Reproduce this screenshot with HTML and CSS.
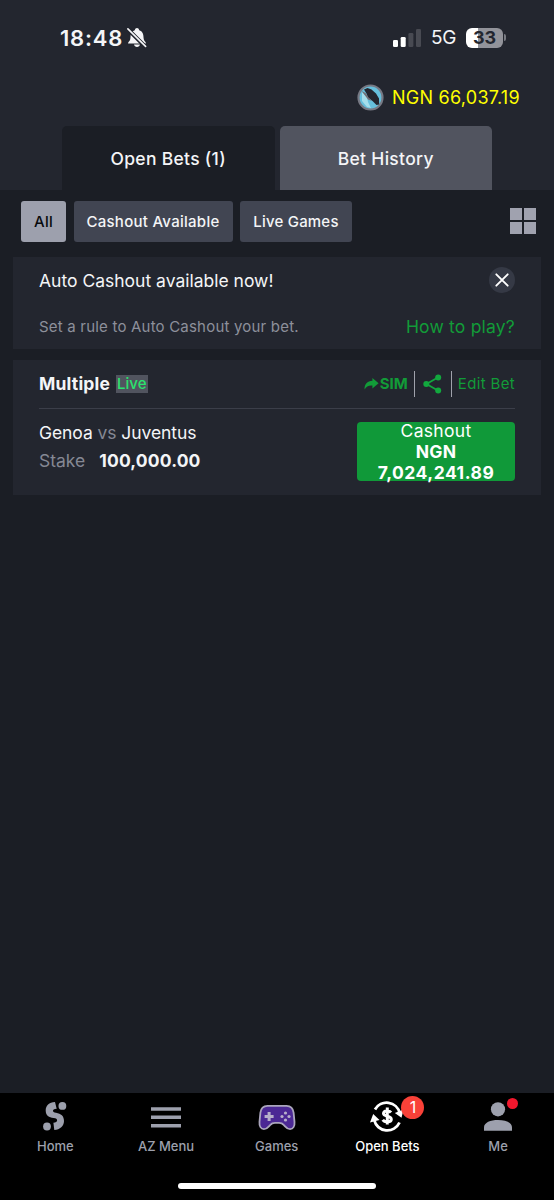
FILE: index.html
```
<!DOCTYPE html>
<html lang="en">
<head>
<meta charset="utf-8">
<title>Open Bets</title>
<link rel="stylesheet" href="styles.css">
</head>
<body>
<div class="app">
  <header class="header">
    <div class="status">
      <span class="clock">18:48</span>
      <svg class="bell" width="20" height="21" viewBox="0 0 20 21">
        <path d="M1 16.400c0-1.800 2.400-2.400 2.400-5.200 0-4.400 1.200-7 4.400-8 .3-1.500 1.100-2.300 2.200-2.300s1.900.8 2.200 2.300c3.200 1 4.400 3.600 4.400 8 0 2.800 2.400 3.400 2.400 5.200z" fill="#f5f5f7"/>
        <path d="M7 17.600h6c-.3 1.600-1.500 2.400-3 2.400s-2.700-.8-3-2.400z" fill="#f5f5f7"/>
        <path d="M0 1.400 18.600 20" stroke="#23262f" stroke-width="4"/>
        <path d="M.9 1.900 18.600 19.400" stroke="#f5f5f7" stroke-width="1.600" stroke-linecap="round"/>
      </svg>
      <svg class="signal" width="28" height="18" viewBox="0 0 28 18">
        <rect x="0" y="11" width="5" height="7" rx="1.300" fill="#fff"/>
        <rect x="7.700" y="8" width="5" height="10" rx="1.300" fill="#fff"/>
        <rect x="15.400" y="4" width="5" height="14" rx="1.300" fill="#484a52"/>
        <rect x="23" y="0" width="5" height="18" rx="1.300" fill="#484a52"/>
      </svg>
      <span class="network">5G</span>
      <span class="battery">33</span><span class="battery-tip"></span>
    </div>
    <div class="balance">
      <svg width="27" height="27" viewBox="0 0 27 27">
        <circle cx="13.500" cy="13.500" r="12" fill="#66bfdc" stroke="#777984" stroke-width="2.200"/>
        <path d="M5 8l5 5 1 5 3 6-4-1-5-6z" fill="#a5deeb"/>
        <path d="M7 5.500l3.500-1.500 4 1.500 4.500 4 3 5 .2 6-2.700.5-4-4-4.500-3.500-1.500-4z" fill="#24252e"/>
        <path d="M4.500 7l4 2 3 4.500 3.500 3.500-4-1.500-3-4z" fill="#746f75"/>
      </svg>
      <span class="amount">NGN 66,037.19</span>
    </div>
    <nav class="tabs">
      <a class="tab active"><span>Open Bets (1)</span></a>
      <a class="tab"><span>Bet History</span></a>
    </nav>
  </header>

  <main class="content">
    <div class="filters">
      <button class="chip all">All</button>
      <button class="chip available">Cashout Available</button>
      <button class="chip live-games">Live Games</button>
      <svg class="grid" width="26" height="26" viewBox="0 0 26 26" fill="#a0a2af">
        <path d="M0 0h12v12H0zM14 0h12v12H14zM0 14h12v12H0zM14 14h12v12H14z"/>
      </svg>
    </div>

    <section class="card promo">
      <div class="row">
        <span class="promo-title">Auto Cashout available now!</span>
        <span class="close"><svg width="26" height="26" viewBox="0 0 26 26"><path d="M7.300 7.300l11.400 11.400M18.700 7.300 7.300 18.700" stroke="#fff" stroke-width="1.900" stroke-linecap="round"/></svg></span>
      </div>
      <div class="row promo-bottom">
        <span class="promo-text">Set a rule to Auto Cashout your bet.</span>
        <a class="how">How to play?</a>
      </div>
    </section>

    <section class="card bet">
      <div class="bet-head">
        <span class="multiple">Multiple</span>
        <span class="live">Live</span>
        <svg class="forward" width="15" height="12" viewBox="0 0 15 12"><path d="M8.400 0 14.600 5.200 8.400 10.400V7.600C4.700 7.200 2.300 8.500.6 11.500.2 6.500 3.300 3 8.400 2.800z" fill="#129b38"/></svg>
        <span class="sim">SIM</span>
        <i class="bar"></i>
        <svg class="share" width="19" height="20" viewBox="0 0 19 20" fill="#12a83e"><path d="M15.300 3.300 3.500 10l11.800 6.700" fill="none" stroke="#12a83e" stroke-width="1.800"/><circle cx="15.200" cy="3.400" r="3"/><circle cx="3.300" cy="10" r="3"/><circle cx="15.200" cy="16.600" r="3"/></svg>
        <i class="bar bar-last"></i>
        <a class="edit">Edit Bet</a>
      </div>
      <div class="bet-body">
        <div class="details">
          <div class="teams">Genoa <span class="muted">vs</span> Juventus</div>
          <div class="stake"><span class="muted">Stake</span><b>100,000.00</b></div>
        </div>
        <button class="cashout"><span class="cash-label">Cashout</span><b>NGN</b><b class="cash-value">7,024,241.89</b></button>
      </div>
    </section>
  </main>

  <footer class="bottom">
    <nav class="menu">
      <a class="item home">
        <svg width="28" height="32" viewBox="0 0 28 32" fill="#9da0ad">
          <circle cx="21.400" cy="4.900" r="3.900"/><circle cx="6" cy="25.500" r="3.900"/>
          <path d="M14 1C8 1.300 4.700 4.800 4.700 9.500c0 5 3.300 7 7.800 7.600 2.800.4 3.600 1 3.600 2.200 0 1.500-1.300 2.200-3.700 2.400l.9 7.300C19 28.600 23 25 23 20c0-5-3-7.400-8-8.200-2.200-.4-3-.9-3-2 0-1.200 1-1.800 3.700-2z"/>
        </svg><span>Home</span>
      </a>
      <a class="item az">
        <svg width="30" height="32" viewBox="0 0 30 32" fill="#9da0ad"><path d="M0 6.200h30v3.600H0zM0 14.600h30v3.400H0zM0 23h30v3.600H0z"/></svg><span>AZ Menu</span>
      </a>
      <a class="item games">
        <svg width="38" height="32" viewBox="0 0 38 32">
          <path d="M9.500 4.900h19c4 0 6.600 2.800 7.100 6.800l.9 9.200c.4 4.400-1.400 7.200-4.400 7.200-2.300 0-3.700-1.100-5.300-3l-1.100-1.200c-1.300-1.500-2.700-2-4.600-2h-4.200c-1.900 0-3.300.5-4.600 2l-1.100 1.200c-1.600 1.900-3 3-5.300 3-3 0-4.800-2.800-4.400-7.200l.9-9.200c.5-4 3.100-6.800 7.100-6.800z" fill="#4b2894" stroke="#aaa5bc" stroke-width="1.800"/>
          <path d="M9.600 11h3v3h3v3h-3v3h-3v-3h-3v-3h3z" fill="#b8b0ca"/>
          <g fill="#b8b0ca"><circle cx="27.500" cy="12" r="1.600"/><circle cx="27.500" cy="19" r="1.600"/><circle cx="24" cy="15.500" r="1.600"/><circle cx="31" cy="15.500" r="1.600"/></g>
        </svg><span>Games</span>
      </a>
      <a class="item open">
        <span class="icon-wrap">
          <svg width="34" height="32" viewBox="0 0 34 32" fill="none" stroke="#fff">
            <path d="M5 8.500A13.400 13.400 0 0 1 29.700 12M29.500 21.500A13.400 13.400 0 0 1 4.200 19" stroke-width="2.800"/>
            <path d="M33.500 8.500 31.500 16.800 24.800 12zM0 21.500 3.200 13 9.500 19z" fill="#fff" stroke="none"/>
            <path d="M21 11.500c-1.600-2-7.500-2.200-7.500 1.100 0 3.500 7.800 1.700 7.800 5.600 0 3.500-6.600 3.500-8.600.7M17.300 6.500v17" stroke-width="3"/>
          </svg>
          <span class="badge">1</span>
        </span>
        <span class="label">Open Bets</span>
      </a>
      <a class="item me">
        <span class="icon-wrap">
          <svg width="28" height="32" viewBox="0 0 28 32" fill="#9da0ad"><circle cx="14" cy="8.300" r="7.100"/><path d="M0 29.700v-3.500c0-4.600 6.500-7.200 14-7.200s14 2.600 14 7.200v3.500z"/></svg>
          <i class="dot"></i>
        </span>
        <span class="label">Me</span>
      </a>
    </nav>
    <div class="home-bar"></div>
  </footer>
</div>
</body>
</html>
```
FILE: styles.css
```
* { box-sizing: border-box; }
body { margin: 0; background: #1b1e25; font-family: Inter, "Liberation Sans", sans-serif; color: #f4f5f7; }
button { font: inherit; color: inherit; border: 0; padding: 0; }
span, a, b { white-space: nowrap; }
svg { display: block; flex: none; }
.app { width: 554px; height: 1200px; display: flex; flex-direction: column; }
.header { height: 190px; background: #23262f; display: flex; flex-direction: column; }
.status { height: 75px; padding-left: 60px; display: flex; align-items: center; }
.clock { width: 67px; font-size: 22px; font-weight: 600; letter-spacing: .8px; }
.signal { margin-left: 246px; }
.network { width: 35px; margin-left: 10px; font-size: 19px; letter-spacing: -.3px; }
.battery { width: 37px; height: 20px; border-radius: 6px; background: linear-gradient(90deg, #fff 33%, #92939a 33%); color: #23262f; font-size: 18px; font-weight: 700; line-height: 20px; text-align: center; }
.battery-tip { width: 2px; height: 7px; margin-left: 1px; border-radius: 0 2px 2px 0; background: #797b82; }
.balance { height: 45px; padding-left: 357px; display: flex; align-items: center; gap: 8px; }
.amount { color: #ff0; font-size: 18px; letter-spacing: .25px; }
.tabs { margin-top: 6px; padding-left: 62px; display: flex; gap: 5px; }
.tab { width: 212.5px; height: 64px; border-radius: 5px 5px 0 0; display: flex; align-items: center; justify-content: center; background: #51545f; font-size: 17.500px; font-weight: 500; letter-spacing: .3px; }
.tab.active { background: #1b1e25; }
.content { flex: 1; }
.filters { height: 67px; padding: 11px 18px 0 21px; display: flex; }
.chip { height: 41px; padding-bottom: 1px; border-radius: 3px; background: #414552; font-size: 15px; font-weight: 500; letter-spacing: .2px; }
.all { width: 45px; background: #9da0ad; color: #08090c; }
.available { width: 159px; margin-left: 7.500px; letter-spacing: .28px; }
.live-games { width: 112px; margin-left: 7.500px; }
.grid { margin: 7px 0 0 auto; }
.card { margin: 0 13px; background: #23262f; }
.promo { height: 92px; padding: 10px 26px 0; }
.row { display: flex; align-items: center; justify-content: space-between; }
.promo-title { font-size: 17.500px; }
.close { width: 26px; height: 26px; border-radius: 50%; background: #353945; }
.promo-bottom { margin-top: 20px; height: 26px; }
.promo-text { color: #8d909b; font-size: 15px; letter-spacing: .2px; }
.how { color: #129b38; font-size: 17.500px; letter-spacing: .2px; }
.bet { height: 135px; margin-top: 11px; padding: 0 26px; }
.bet-head { height: 49px; padding-bottom: 1px; display: flex; align-items: center; border-bottom: 1px solid #3b3e49; }
.multiple { width: 77px; font-size: 17.500px; font-weight: 700; letter-spacing: .2px; }
.live { width: 32px; height: 18px; background: #51545f; color: #2be36d; font-size: 15px; font-weight: 500; line-height: 18px; text-align: center; }
.forward { margin-left: 216px; }
.sim { width: 28px; margin-left: 1px; color: #129b38; font-size: 15px; font-weight: 700; }
.bar { width: 1px; height: 26px; margin-left: 6px; background: #a0a2ac; }
.share { margin-left: 8.500px; }
.bar-last { margin-left: 8.500px; }
.edit { margin-left: 6px; color: #129b38; font-size: 15px; letter-spacing: .35px; }
.bet-body { display: flex; justify-content: space-between; padding-top: 13px; }
.details { font-size: 17.500px; line-height: 28px; margin-top: -3px; }
.teams { letter-spacing: -.08px; }
.muted { color: #858894; }
.stake { display: flex; gap: 14px; }
.stake b { font-weight: 700; letter-spacing: .15px; }
.cashout { width: 158px; height: 59px; border-radius: 4px; background: #109939; color: #fff; display: flex; flex-direction: column; align-items: center; justify-content: center; font-size: 17.500px; line-height: 21.300px; letter-spacing: .3px; }
.cash-value { letter-spacing: .5px; }
.bottom { height: 107px; background: #000; }
.menu { display: grid; grid-template-columns: repeat(5, 110.700px); height: 93px; padding-top: 8px; }
.item { display: flex; flex-direction: column; align-items: center; gap: 6px; color: #9da0ad; font-size: 13px; font-weight: 500; line-height: 14px; }
.open { color: #fff; }
.icon-wrap { position: relative; }
.badge { position: absolute; left: 31px; top: -5px; width: 23px; height: 23px; border-radius: 50%; background: #f94138; color: #fff; font-size: 16px; line-height: 23px; text-align: center; font-weight: 400; }
.dot { position: absolute; left: 23px; top: -3px; width: 11px; height: 11px; border-radius: 50%; background: #f2172d; }
.home-bar { width: 198px; height: 6px; margin: -3px auto 0; border-radius: 3px; background: #fff; }
```
